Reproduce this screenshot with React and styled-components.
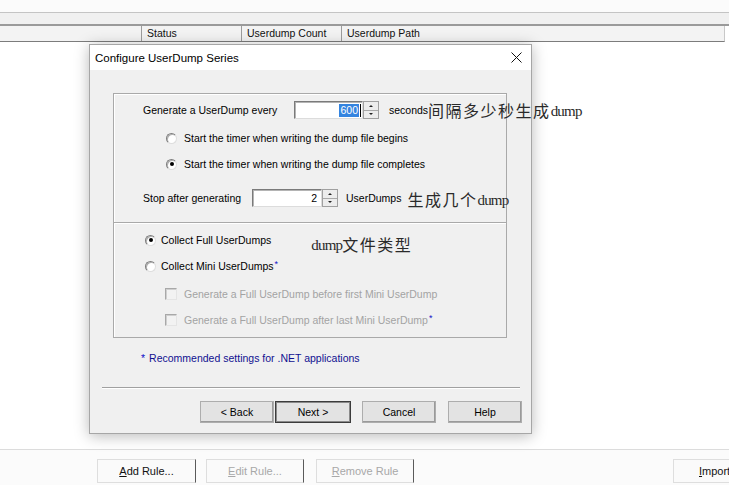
import React from "react";
import styled, { createGlobalStyle } from "styled-components";

const GlobalStyles = createGlobalStyle`
    html, body {
        margin: 0;
        padding: 0;
        background: #ffffff;
    }
    body {
        width: 729px;
        height: 485px;
        overflow: hidden;
        font-family: "Liberation Sans", Arial, sans-serif;
        color: #000;
    }
`

const Screen = styled.div`
    position: relative;
    width: 729px;
    height: 485px;
    display: flex;
    flex-direction: column;
    background: #ffffff;
    overflow: hidden;
`

const TopGap = styled.div`
    height: 12px;
    background: #fbfbfb;
    border-bottom: 1px solid #c4c4c4;
`

const Strip = styled.div`
    height: 11px;
    background: #f0f0f0;
    border-bottom: 2px solid #9a9a9a;
`

const Header = styled.div`
    display: flex;
    width: 724px;
    height: 15px;
    background: #f3f3f3;
    border-bottom: 1px solid #7c7c7c;
    border-right: 1px solid #c8c8c8;
`

const HeaderCell = styled.div`
    box-sizing: border-box;
    width: ${props => props.w}px;
    flex: ${props => props.grow ? 1 : 'none'};
    padding-left: 5px;
    border-right: ${props => props.grow ? 'none' : '1px solid #9c9c9c'};
    font-size: 10.5px;
    line-height: 15px;
    color: #111;
`

const ListArea = styled.div`
    flex: 1;
    background: #ffffff;
`

const BottomBar = styled.div`
    height: 36px;
    border-top: 1px solid #dcdcdc;
    background: #fbfbfb;
    display: flex;
    align-items: flex-start;
    padding-top: 9px;
    box-sizing: border-box;
`

const BarButton = styled.div`
    flex: none;
    box-sizing: border-box;
    width: ${props => props.w || 99}px;
    height: 24px;
    margin-left: ${props => props.ml}px;
    background: #fafafa;
    border: 1px solid #dedede;
    border-right: 1px solid #5a5a5a;
    display: flex;
    align-items: center;
    justify-content: ${props => props.left ? 'flex-start' : 'center'};
    padding-left: ${props => props.left ? 25 : 0}px;
    font-size: 11px;
    color: ${props => props.disabled ? '#a8a8a8' : '#111'};
    u {
        text-decoration: underline;
    }
`

const Dialog = styled.div`
    position: absolute;
    left: 89px;
    top: 44px;
    width: 443px;
    height: 390px;
    box-sizing: border-box;
    border: 1px solid #a6a6a6;
    background: #f0f0f0;
    box-shadow: 0 2px 14px rgba(0, 0, 0, 0.28);
    display: flex;
    flex-direction: column;
`

const TitleBar = styled.div`
    height: 25px;
    background: #ffffff;
    display: flex;
    align-items: center;
    justify-content: space-between;
    padding: 0 9px 0 5px;
`

const Title = styled.div`
    font-size: 11.5px;
    color: #000;
`

const Body = styled.div`
    flex: 1;
    padding: 23px 11px 10px 12px;
    display: flex;
    flex-direction: column;
`

const GroupBox = styled.div`
    margin: 0 13px 0 11px;
    border: 1px solid #a9a9a9;
    border-top: ${props => props.joined ? 'none' : '1px solid #a9a9a9'};
    border-bottom: ${props => props.open ? 'none' : '1px solid #a9a9a9'};
    box-shadow: inset 1px 1px 0 #ffffff;
    padding: ${props => props.pad};
    display: flex;
    flex-direction: column;
`

const Divider = styled.div`
    margin: 0 13px 0 11px;
    height: 1px;
    background: #a9a9a9;
`

const FieldRow = styled.div`
    display: flex;
    align-items: center;
    height: 18px;
    margin-top: ${props => props.mt || 0}px;
    padding-left: 29px;
    white-space: nowrap;
    & > * {
        flex: none;
    }
`

const Label = styled.span`
    width: ${props => props.w}px;
    font-size: 10.5px;
`

const Unit = styled.span`
    font-size: 10.5px;
    margin-left: ${props => props.ml}px;
`

const NumInput = styled.div`
    box-sizing: border-box;
    width: ${props => props.w}px;
    height: 18px;
    background: #ffffff;
    border: 1px solid;
    border-color: #7a7a7a #dcdcdc #dcdcdc #7a7a7a;
    box-shadow: inset 1px 1px 0 #b4b4b4;
    display: flex;
    align-items: center;
    justify-content: flex-end;
    padding-right: 1px;
    font-size: 10.5px;
`

const Selected = styled.span`
    background: #3484e0;
    color: #ffffff;
    padding: 0 1px;
    line-height: 13px;
`

const Caret = styled.span`
    width: 1px;
    height: 13px;
    background: #000;
    margin-left: 1px;
`

const Spin = styled.div`
    box-sizing: border-box;
    width: 16px;
    height: 18px;
    border: 1px solid #a0a0a0;
    background: #ececec;
    display: flex;
    flex-direction: column;
`

const SpinHalf = styled.div`
    flex: 1;
    display: flex;
    align-items: center;
    justify-content: center;
    & + & {
        border-top: 1px solid #a8a8a8;
    }
`

const Arrow = styled.span`
    width: 0;
    height: 0;
    border-left: 2px solid transparent;
    border-right: 2px solid transparent;
    ${props => props.down ? 'border-top: 2px solid #222;' : 'border-bottom: 2px solid #222;'}
`

const Annot = styled.span`
    font-family: "Liberation Serif", "Noto Sans CJK SC", serif;
    font-size: 16px;
    letter-spacing: 1.5px;
    color: #2a2a2a;
    margin-left: ${props => props.ml || 0}px;
    padding-top: ${props => props.pt || 0}px;
    white-space: nowrap;
`

const Latin = styled.span`
    font-family: "Liberation Serif", serif;
    font-size: 15px;
    letter-spacing: -0.8px;
    vertical-align: 1px;
`

const OptionRow = styled.div`
    display: flex;
    align-items: center;
    height: 26px;
    padding-left: ${props => props.indent}px;
    font-size: 10.5px;
    color: ${props => props.disabled ? '#a3a3a3' : '#000'};
    white-space: nowrap;
    margin-top: ${props => props.mt || 0}px;
`

const RadioDot = styled.span`
    flex: none;
    box-sizing: border-box;
    width: 11px;
    height: 11px;
    border-radius: 50%;
    background: #ffffff;
    border: 1px solid;
    border-color: #7d7d7d #dedede #dedede #7d7d7d;
    box-shadow: inset 1px 1px 0 #b0b0b0;
    margin-right: ${props => props.gap}px;
    display: flex;
    align-items: center;
    justify-content: center;
    &::after {
        content: "";
        width: 4px;
        height: 4px;
        border-radius: 50%;
        background: ${props => props.on ? '#000' : 'transparent'};
    }
`

const CheckBox = styled.span`
    flex: none;
    box-sizing: border-box;
    width: 12px;
    height: 12px;
    background: #f2f2f2;
    border: 1px solid;
    border-color: #a8a8a8 #e4e4e4 #e4e4e4 #a8a8a8;
    box-shadow: inset 1px 1px 0 #cfcfcf;
    margin-right: 7px;
`

const Star = styled.sup`
    color: #1010c8;
    font-size: 9px;
    margin-left: 1px;
    position: relative;
    top: -2px;
`

const Note = styled.div`
    margin: 12px 0 0 39px;
    font-size: 10.5px;
    color: #101090;
    height: 16px;
    line-height: 16px;
`

const NoteStar = styled.span`
    color: #1010c8;
    margin-right: 4px;
`

const Separator = styled.div`
    margin-top: 21px;
    height: 1px;
    background: #a0a0a0;
    border-bottom: 1px solid #ffffff;
`

const ButtonRow = styled.div`
    display: flex;
    justify-content: flex-end;
    margin: 12px -2px 0 0;
`

const DlgButton = styled.div`
    box-sizing: border-box;
    width: ${props => props.w || 74}px;
    height: 22px;
    margin-left: ${props => props.ml || 0}px;
    background: #e3e3e3;
    border: 1px solid ${props => props.primary ? '#3c3c3c' : '#adadad'};
    box-shadow: ${props => props.primary ? 'inset 0 0 0 1px #8a8a8a' : 'inset -1px -1px 0 #9a9a9a'};
    display: flex;
    align-items: center;
    justify-content: center;
    font-size: 10.5px;
    color: #000;
`

const CloseIcon = () => (
    <svg width="11" height="11" viewBox="0 0 11 11">
        <path d="M0.5 0.5 L10.5 10.5 M10.5 0.5 L0.5 10.5" stroke="#111" strokeWidth="1" fill="none" />
    </svg>
)

const Spinner = () => (
    <Spin>
        <SpinHalf><Arrow /></SpinHalf>
        <SpinHalf><Arrow down /></SpinHalf>
    </Spin>
)

const App = () => {
    const columns = [
        {name: '', w: 142},
        {name: 'Status', w: 100},
        {name: 'Userdump Count', w: 100},
        {name: 'Userdump Path', grow: true},
    ];

    return (
        <Screen>
            <GlobalStyles />
            <TopGap />
            <Strip />
            <Header>
                {columns.map((c, i) => (
                    <HeaderCell key={i} w={c.w} grow={c.grow}>{c.name}</HeaderCell>
                ))}
            </Header>
            <ListArea />
            <BottomBar>
                <BarButton ml={97}><span><u>A</u>dd Rule...</span></BarButton>
                <BarButton ml={10} w={98} disabled><span><u>E</u>dit Rule...</span></BarButton>
                <BarButton ml={12} w={98} disabled><span><u>R</u>emove Rule</span></BarButton>
                <BarButton ml={259} w={98} left><span><u>I</u>mport</span></BarButton>
            </BottomBar>

            <Dialog>
                <TitleBar>
                    <Title>Configure UserDump Series</Title>
                    <CloseIcon />
                </TitleBar>
                <Body>
                    <GroupBox open pad="7px 0 15px 0">
                        <FieldRow>
                            <Label w={151}>Generate a UserDump every</Label>
                            <NumInput w={69}><Selected>600</Selected><Caret /></NumInput>
                            <Spinner />
                            <Unit ml={10}>seconds</Unit>
                            <Annot>间隔多少秒生成<Latin>dump</Latin></Annot>
                        </FieldRow>
                        <OptionRow indent={52} mt={6}>
                            <RadioDot gap={7} />Start the timer when writing the dump file begins
                        </OptionRow>
                        <OptionRow indent={52}>
                            <RadioDot gap={7} on />Start the timer when writing the dump file completes
                        </OptionRow>
                        <FieldRow mt={12}>
                            <Label w={109}>Stop after generating</Label>
                            <NumInput w={70}>2&nbsp;</NumInput>
                            <Spinner />
                            <Unit ml={8}>UserDumps</Unit>
                            <Annot ml={6} pt={2}>生成几个<Latin>dump</Latin></Annot>
                        </FieldRow>
                    </GroupBox>
                    <Divider />
                    <GroupBox joined pad="4px 0 4px 0">
                        <OptionRow indent={31}>
                            <RadioDot gap={5} on />Collect Full UserDumps
                            <Annot ml={40} pt={8}><Latin>dump</Latin>文件类型</Annot>
                        </OptionRow>
                        <OptionRow indent={31}>
                            <RadioDot gap={5} />Collect Mini UserDumps<Star>*</Star>
                        </OptionRow>
                        <OptionRow indent={51} mt={2} disabled>
                            <CheckBox />Generate a Full UserDump before first Mini UserDump
                        </OptionRow>
                        <OptionRow indent={51} disabled>
                            <CheckBox />Generate a Full UserDump after last Mini UserDump<Star>*</Star>
                        </OptionRow>
                    </GroupBox>
                    <Note><NoteStar>*</NoteStar>Recommended settings for .NET applications</Note>
                    <Separator />
                    <ButtonRow>
                        <DlgButton>&lt; Back</DlgButton>
                        <DlgButton ml={1} w={76} primary>Next &gt;</DlgButton>
                        <DlgButton ml={11}>Cancel</DlgButton>
                        <DlgButton ml={12}>Help</DlgButton>
                    </ButtonRow>
                </Body>
            </Dialog>
        </Screen>
    );
}

export default App;
